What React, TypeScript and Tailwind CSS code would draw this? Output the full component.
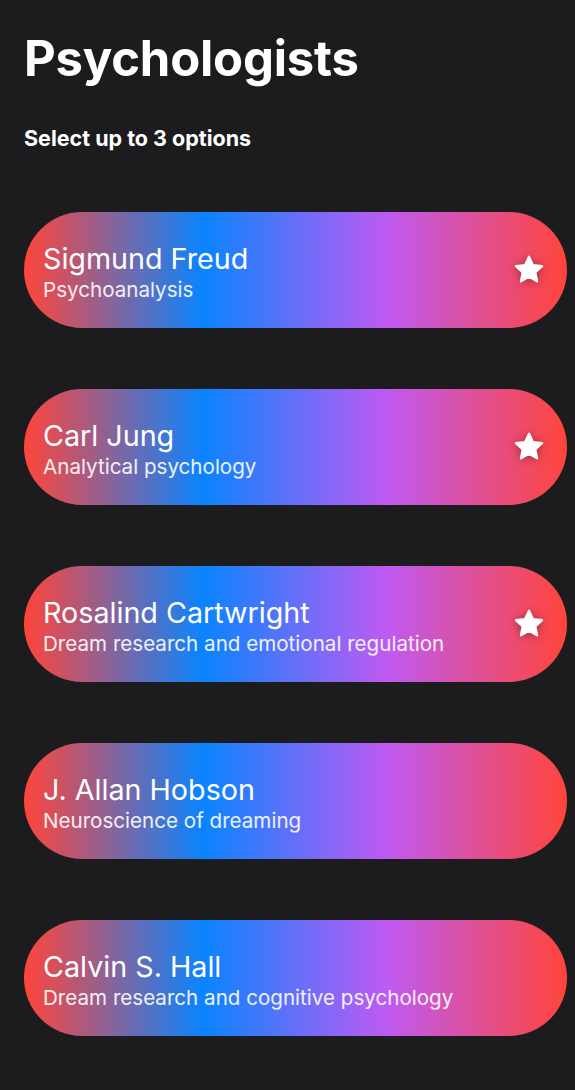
const people = [
  { name: "Sigmund Freud", field: "Psychoanalysis", starred: true },
  { name: "Carl Jung", field: "Analytical psychology", starred: true },
  { name: "Rosalind Cartwright", field: "Dream research and emotional regulation", starred: true },
  { name: "J. Allan Hobson", field: "Neuroscience of dreaming", starred: false },
  { name: "Calvin S. Hall", field: "Dream research and cognitive psychology", starred: false },
];

const Star = () => (
  <svg width="34" height="34" viewBox="0 0 24 24" className="drop-shadow-[0_1px_4px_rgba(0,0,0,0.35)]">
    <path
      d="M12 2.6l2.75 5.9 6.45.75-4.78 4.4 1.3 6.38L12 16.85l-5.72 3.18 1.3-6.38-4.78-4.4 6.45-.75z"
      fill="#fff"
      stroke="#fff"
      strokeWidth="1.6"
      strokeLinejoin="round"
    />
  </svg>
);

export default function App() {
  return (
    <div className="min-h-[1090px] bg-[#1c1c1e] px-6 pt-[28px] font-['Inter',sans-serif] text-white">
      <h1 className="text-[49px] font-bold leading-[62px] tracking-[-0.2px]">Psychologists</h1>
      <p className="mt-[36px] text-[21.5px] font-bold leading-6">Select up to 3 options</p>
      <div className="mt-[62px] flex flex-col gap-[61px]">
        {people.map((p) => (
          <div
            key={p.name}
            className="flex h-[116px] w-[543px] items-center justify-between rounded-full bg-[linear-gradient(90deg,#ff453a_0%,#0a84ff_33%,#bf5af2_67%,#ff453a_100%)] pl-[19px] pr-[21px]"
          >
            <div className="mt-[3px] flex flex-col">
              <span className="text-[28.7px] leading-[34px]">{p.name}</span>
              <span className="mt-[1px] text-[20.6px] leading-[25px] text-white/90">{p.field}</span>
            </div>
            {p.starred && <Star />}
          </div>
        ))}
      </div>
    </div>
  );
}
